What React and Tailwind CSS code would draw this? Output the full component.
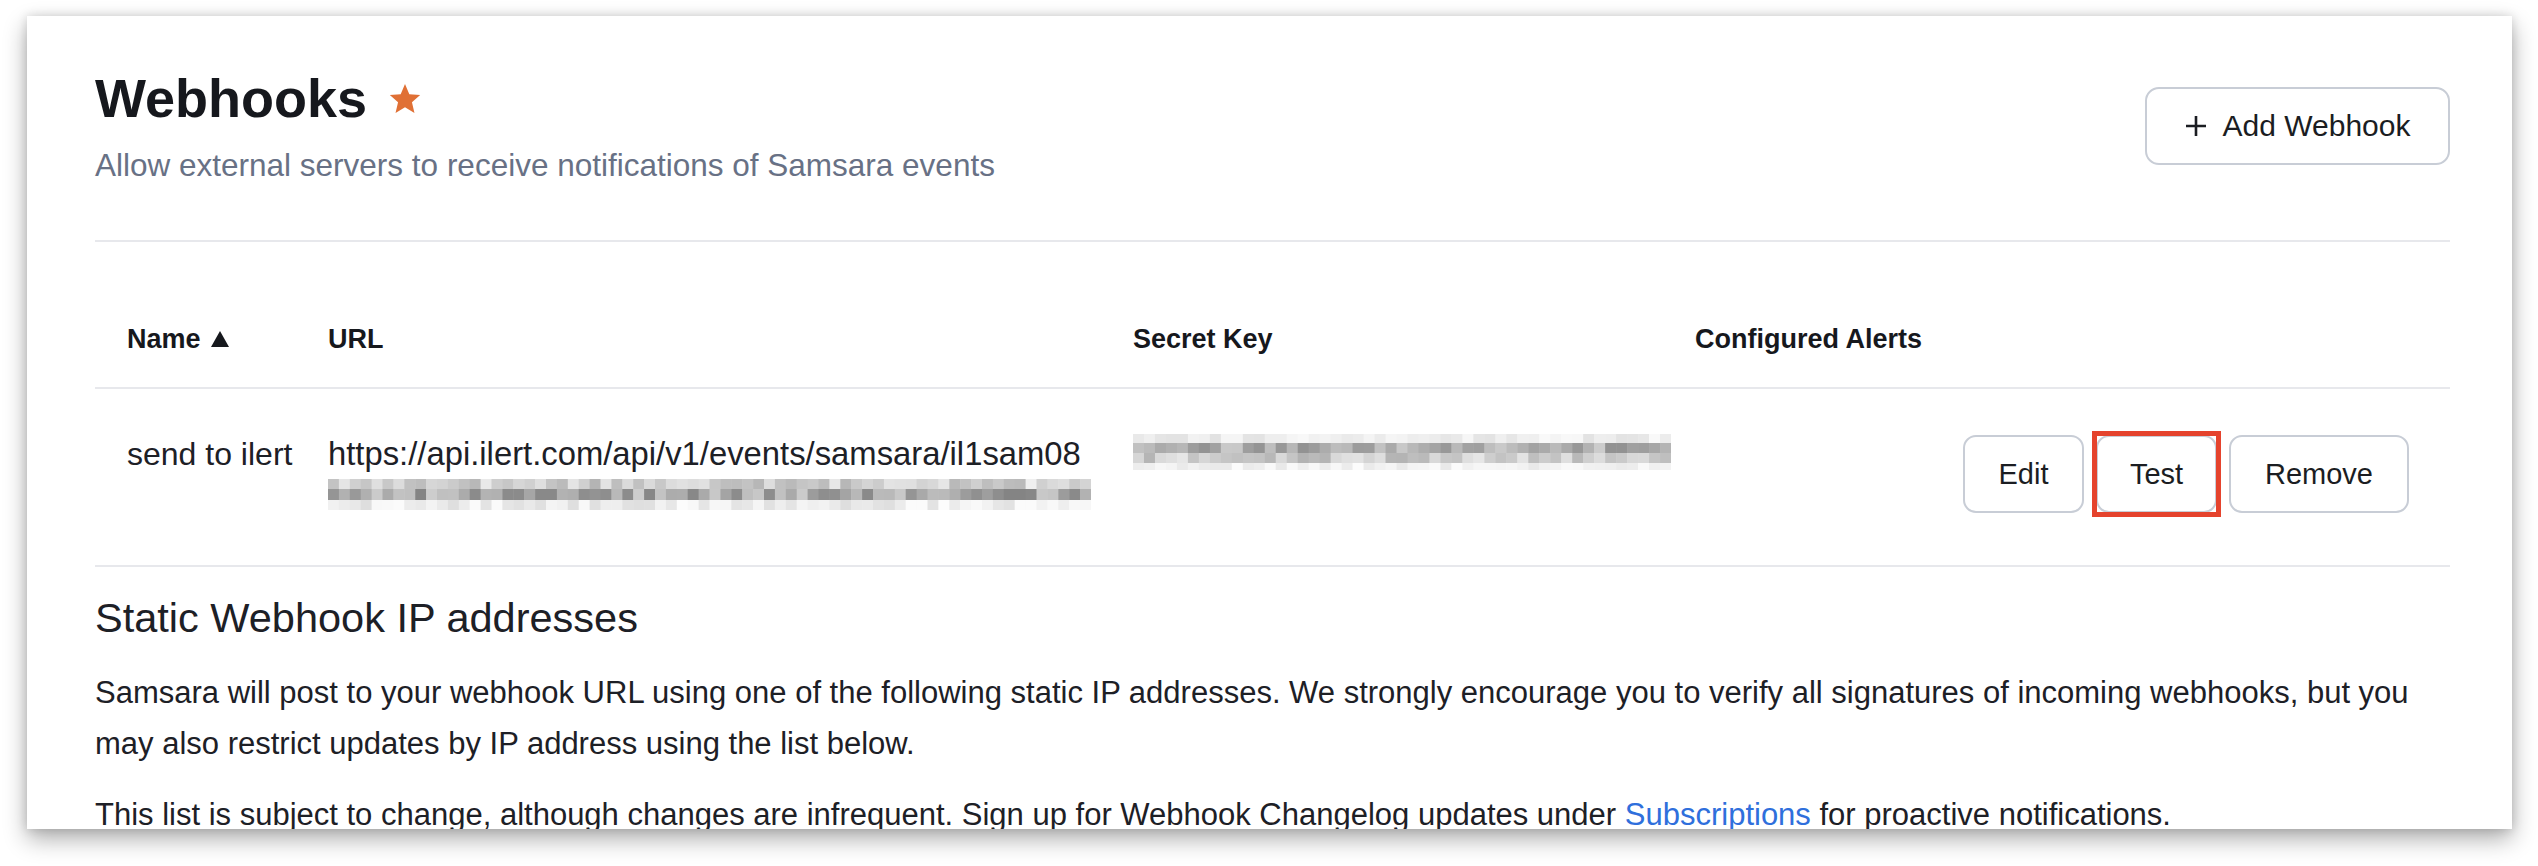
import React from "react";

// simple seeded generator so the redacted mosaics stay stable between renders
function makeRand(seed) {
  let x = seed >>> 0;
  return () => {
    x = (Math.imul(x, 1664525) + 1013904223) >>> 0;
    return x / 4294967296;
  };
}

function Mosaic({ seed, width, cols, rowHeights, ranges }) {
  const rand = makeRand(seed);
  const cw = width / cols;
  const cells = [];
  let y = 0;
  rowHeights.forEach((h, r) => {
    const [lo, hi] = ranges[r];
    for (let c = 0; c < cols; c++) {
      const v = Math.round(lo + (hi - lo) * rand());
      cells.push({ x: c * cw, y, w: cw + 0.5, h, v });
    }
    y += h;
  });
  return (
    <svg width={width} height={y} viewBox={`0 0 ${width} ${y}`} className="block">
      {cells.map((cell, i) => (
        <rect
          key={i}
          x={cell.x}
          y={cell.y}
          width={cell.w}
          height={cell.h}
          fill={`rgb(${cell.v},${cell.v},${cell.v})`}
        />
      ))}
    </svg>
  );
}

function Star() {
  return (
    <svg width="34" height="32" viewBox="0 0 24 23">
      <path
        d="M12 0.8l3.1 7.2 7.8 0.7-5.9 5.1 1.8 7.7L12 17.4l-6.8 4.1 1.8-7.7-5.9-5.1 7.8-0.7z"
        fill="#e07035"
      />
    </svg>
  );
}

function ActionButton({ label, width, highlighted }) {
  return (
    <div className="relative">
      <button
        className={`${width} h-[78px] rounded-[13px] border-2 border-[#c8cdd6] bg-white text-[29px] text-[#1b1d22]`}
      >
        {label}
      </button>
      {highlighted && (
        <div className="absolute -inset-[4px] border-[5px] border-[#e5432d] pointer-events-none" />
      )}
    </div>
  );
}

export default function App() {
  return (
    <div className="min-h-screen bg-white pt-[16px] pl-[27px] pr-[26px] font-['Liberation_Sans',Arial,sans-serif]">
      <div className="h-[813px] overflow-hidden bg-white pl-[68px] pr-[62px] shadow-[0_10px_22px_rgba(0,0,0,0.32),0_0_10px_rgba(0,0,0,0.14)]">
        {/* Header */}
        <div className="pt-[50px] flex items-center justify-between">
          <div>
            <div className="flex items-center gap-[21px]">
              <h1 className="text-[54px] leading-[65px] font-bold text-[#16181d]">Webhooks</h1>
              <Star />
            </div>
            <p className="mt-[14px] text-[31.5px] leading-[40px] text-[#687185]">
              Allow external servers to receive notifications of Samsara events
            </p>
          </div>
          <button className="w-[305px] h-[78px] rounded-[14px] border-2 border-[#c8cdd6] bg-white flex items-center justify-center gap-[16px] text-[30px] text-[#1b1d22]">
            <svg width="22" height="22" viewBox="0 0 22 22">
              <path d="M11 1v20M1 11h20" stroke="#1b1d22" strokeWidth="2.6" />
            </svg>
            Add Webhook
          </button>
        </div>

        <div className="mt-[55px] h-[2px] bg-[#e7e8ec]" />

        {/* Table */}
        <div className="mt-[49px]">
          <div className="flex border-b-2 border-[#e7e8ec] py-[30px] text-[27px] leading-[36px] font-bold text-[#16181d]">
            <div className="w-[201px] pl-[32px] flex items-center gap-[10px]">
              Name
              <svg width="18" height="16" viewBox="0 0 18 16">
                <path d="M9 0L18 16H0z" fill="#16181d" />
              </svg>
            </div>
            <div className="w-[805px] pl-[32px]">URL</div>
            <div className="w-[562px] pl-[32px]">Secret Key</div>
            <div className="flex-1 pl-[32px]">Configured Alerts</div>
          </div>

          <div className="flex border-b-2 border-[#e7e8ec] pt-[45px] pb-[51px] text-[32px] leading-[40px] text-[#1d2026]">
            <div className="w-[201px] pl-[32px] whitespace-nowrap">send to ilert</div>
            <div className="w-[805px] pl-[32px]">
              <div className="whitespace-nowrap text-[32.8px]">https://api.ilert.com/api/v1/events/samsara/il1sam08</div>
              <div className="h-[40px] pt-[5px]">
                <Mosaic
                  seed={17}
                  width={763}
                  cols={70}
                  rowHeights={[10, 11, 10]}
                  ranges={[
                    [180, 240],
                    [130, 205],
                    [222, 252],
                  ]}
                />
              </div>
            </div>
            <div className="w-[562px] pl-[32px]">
              <Mosaic
                seed={91}
                width={538}
                cols={49}
                rowHeights={[9, 10, 10, 7]}
                ranges={[
                  [226, 250],
                  [145, 210],
                  [178, 232],
                  [232, 252],
                ]}
              />
            </div>
            <div className="flex-1" />
            <div className="self-center flex items-center gap-[12px] pr-[41px]">
              <ActionButton label="Edit" width="w-[121px]" />
              <ActionButton label="Test" width="w-[121px]" highlighted />
              <ActionButton label="Remove" width="w-[180px]" />
            </div>
          </div>
        </div>

        {/* Static IPs */}
        <div className="pt-[27px] text-[#1d2026]">
          <h2 className="text-[41.5px] leading-[48px]">Static Webhook IP addresses</h2>
          <p className="mt-[25px] text-[31px] leading-[51px]">
            Samsara will post to your webhook URL using one of the following static IP addresses. We strongly
            encourage you to verify all signatures of incoming webhooks, but you may also restrict updates by IP
            address using the list below.
          </p>
          <p className="mt-[20px] text-[31px] leading-[51px]">
            This list is subject to change, although changes are infrequent. Sign up for Webhook Changelog updates
            under <a className="text-[#2f6fdc]">Subscriptions</a> for proactive notifications.
          </p>
        </div>
      </div>
    </div>
  );
}
